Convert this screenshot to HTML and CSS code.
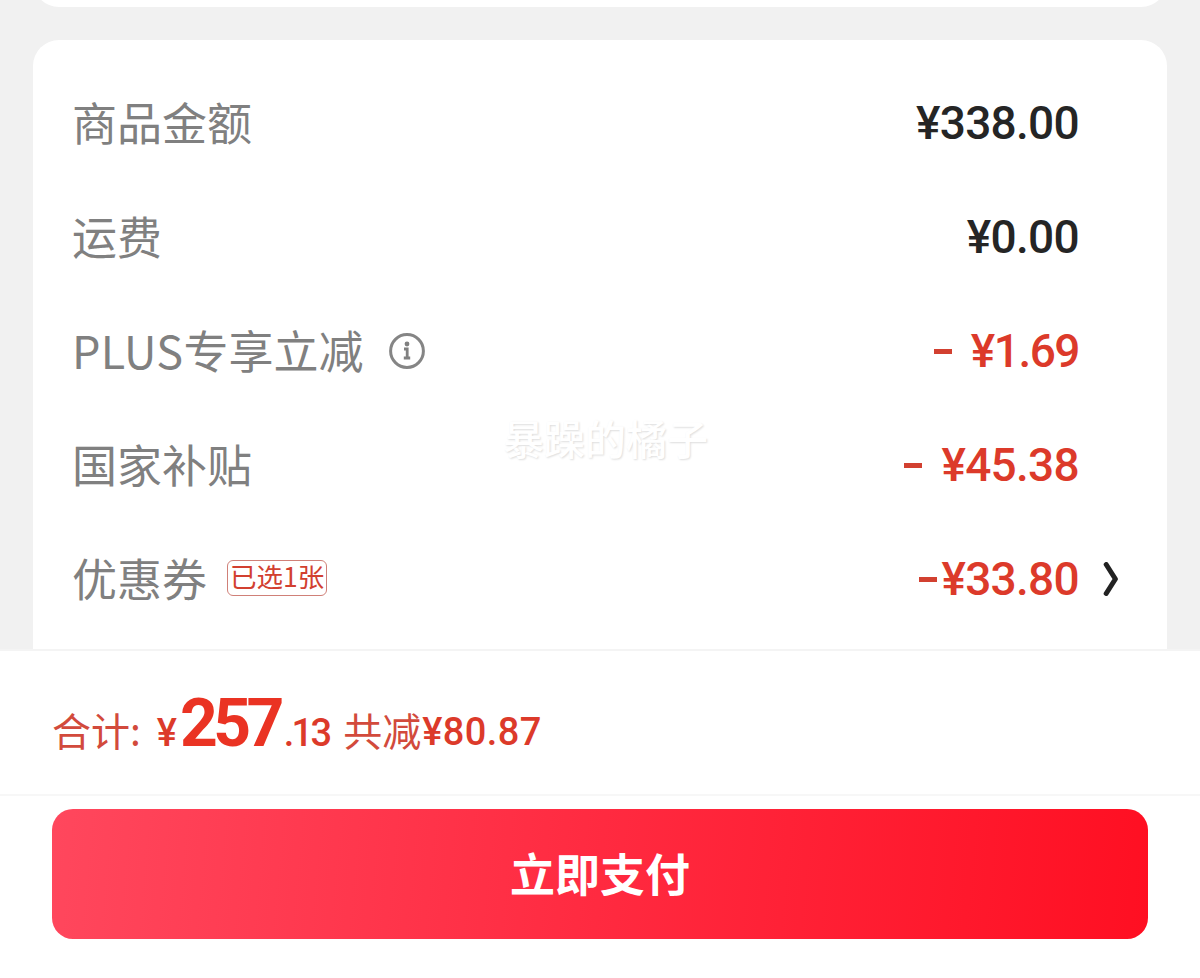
FILE: index.html
```html
<!DOCTYPE html>
<html lang="zh-CN">

<head>
    <meta charset="utf-8">
    <meta name="viewport" content="width=device-width, initial-scale=1.0">
    <title>确认订单</title>
    <link rel="stylesheet" href="styles.css">
</head>

<body>

    <main class="content">
        <div class="card-prev"></div>
        <div class="card">
            <div class="row">
                <span class="label">商品金额</span>
                <span class="price">¥338.00</span>
            </div>
            <div class="row">
                <span class="label">运费</span>
                <span class="price">¥0.00</span>
            </div>
            <div class="row">
                <span class="label"><span class="latin">PLUS</span>专享立减</span>
                <svg class="info" viewBox="0 0 36 36">
                    <circle cx="18" cy="18" r="16.4" fill="none" stroke="#858585" stroke-width="3" />
                    <circle cx="18" cy="11" r="2.4" fill="#808080" />
                    <path d="M15 16h3.2v8.4M14.8 25h6.4" fill="none" stroke="#808080" stroke-width="2.8" />
                </svg>
                <span class="price minus"><span class="dash gap"></span><span class="narrow">¥1.69</span></span>
            </div>
            <div class="row">
                <span class="label">国家补贴</span>
                <span class="price minus"><span class="dash gap"></span>¥45.38</span>
            </div>
            <div class="row">
                <span class="label">优惠券</span>
                <span class="tag">已选1张</span>
                <span class="price minus"><span class="dash"></span>¥33.80</span>
                <svg class="arrow" viewBox="0 0 16 34">
                    <path d="M3.2 2.5L12.4 17L3.2 31.5" fill="none" stroke="#222" stroke-width="5" stroke-linecap="round" stroke-linejoin="round" />
                </svg>
            </div>
            <div class="watermark">暴躁的橘子</div>
        </div>
    </main>

    <footer>
        <div class="total">
            <span class="total-label">合计:</span>
            <span class="yen">¥</span>
            <span class="big">257</span>
            <span class="cents">.13</span>
            <span class="saved">共减<span class="saved-price">¥80.87</span></span>
        </div>
        <div class="pay">
            <button>立即支付</button>
        </div>
    </footer>

</body>

</html>
```
FILE: styles.css
```css
* {
    box-sizing: border-box;
}

body {
    margin: 0;
    height: 978px;
    overflow: hidden;
    display: flex;
    flex-direction: column;
    background-color: #f1f1f1;
    font-family: "Noto Sans CJK SC", sans-serif;
}

.content {
    height: 649px;
    overflow: hidden;
    padding: 0 33px;
}

.card {
    position: relative;
    height: 640px;
    padding: 26px 88px 0 39px;
    background-color: white;
    border-radius: 26px;
}

/* bottom edge of the card above */
.card-prev {
    height: 30px;
    margin-top: -23px;
    margin-bottom: 33px;
    background-color: white;
    border-radius: 0 0 26px 26px;
}

.row {
    position: relative;
    display: flex;
    align-items: center;
    height: 114px;
}

.label {
    padding-bottom: 2px;
    font-size: 45px;
    line-height: 60px;
    color: #808080;
}

.latin {
    letter-spacing: 0.3px;
}

.info {
    width: 36px;
    height: 36px;
    margin-left: 26px;
}

.price {
    display: flex;
    align-items: center;
    margin-left: auto;
    font-family: Roboto, sans-serif;
    font-weight: 500;
    font-size: 46px;
    line-height: 60px;
    letter-spacing: -0.7px;
    color: #252525;
}

.minus {
    color: #dc3a2a;
}

.narrow {
    letter-spacing: -1.5px;
}

.dash {
    width: 18px;
    height: 5px;
    margin-right: 4px;
    background-color: #d24030;
}

.gap {
    margin-right: 19px;
}

.tag {
    height: 36px;
    margin-left: 20px;
    margin-top: -3px;
    padding: 0 2px;
    border: 1px solid #d08078;
    border-radius: 6px;
    font-size: 26.5px;
    line-height: 30px;
    color: #d24030;
}

.arrow {
    position: absolute;
    right: -40px;
    top: 40px;
    width: 16px;
    height: 34px;
}

.watermark {
    position: absolute;
    left: 470px;
    top: 367px;
    font-size: 41px;
    font-weight: 500;
    line-height: 60px;
    color: white;
    text-shadow: 1px 1px 2px #dedede;
}

footer {
    flex: 1;
    background-color: white;
    border-top: 2px solid #f4f4f4;
}

.total {
    display: flex;
    align-items: baseline;
    height: 145px;
    padding: 33px 52px 0;
    border-bottom: 2px solid #f7f7f7;
    font-family: Roboto, sans-serif;
    font-weight: 500;
    line-height: 80px;
    color: #dc3a2a;
}

.total-label,
.saved {
    padding-bottom: 2px;
    font-family: "Noto Sans CJK SC", sans-serif;
    font-weight: 400;
    font-size: 39px;
    line-height: 60px;
    color: #d24a3c;
}

.yen {
    margin-left: 16px;
    font-size: 38px;
}

.big {
    margin-left: 3px;
    font-size: 66px;
    font-weight: 700;
    letter-spacing: -4.6px;
    color: #ea3323;
}

.cents {
    margin-left: 4px;
    font-size: 38px;
    letter-spacing: -2.8px;
}

.saved {
    margin-left: 14px;
}

.saved-price {
    margin-left: 1px;
    font-family: Roboto, sans-serif;
    font-weight: 500;
    font-size: 38px;
    letter-spacing: 0.4px;
    vertical-align: 1px;
    color: #dc3a2a;
}

.pay {
    padding: 13px 52px 0;
}

button {
    display: block;
    width: 100%;
    height: 130px;
    padding: 0 0 4px;
    border: none;
    border-radius: 21px;
    background: linear-gradient(95deg, #ff475d, #ff2a40 50%, #ff0f22);
    font-family: "Noto Sans CJK SC", sans-serif;
    font-weight: 700;
    font-size: 45px;
    color: white;
}
```
